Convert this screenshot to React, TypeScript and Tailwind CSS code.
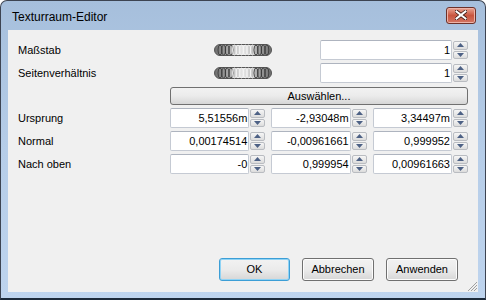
import React from "react";

const font = { fontFamily: '"Liberation Sans", Arial, sans-serif' };

function Spinner() {
  return (
    <div className="flex flex-col w-[15px] h-full gap-[1px] py-[1px]">
      {[0, 1].map((i) => (
        <div
          key={i}
          className="flex-1 flex items-center justify-center border border-[#b9bcc1] rounded-[2px] bg-gradient-to-b from-[#f6f6f6] to-[#dcdcdc]"
        >
          <svg width="7" height="4" viewBox="0 0 7 4">
            {i === 0 ? (
              <polygon points="0,4 7,4 3.5,0" fill="#4d6185" />
            ) : (
              <polygon points="0,0 7,0 3.5,4" fill="#4d6185" />
            )}
          </svg>
        </div>
      ))}
    </div>
  );
}

function NumField({ value, className = "" }: { value: string; className?: string }) {
  return (
    <div className={`flex h-[20px] gap-[1px] ${className}`}>
      <div className="flex-1 min-w-0 flex items-center justify-end pr-[1px] bg-white border border-[#c5cad3] border-t-[#aeb4bf] rounded-[2px] text-[11px] text-black leading-none whitespace-nowrap overflow-hidden">
        {value}
      </div>
      <Spinner />
    </div>
  );
}

function Knob() {
  const ridges = Array.from({ length: 14 }, (_, i) => i);
  return (
    <svg width="58" height="12" viewBox="0 0 58 12">
      <defs>
        <linearGradient id="kg" x1="0" x2="1" y1="0" y2="0">
          <stop offset="0" stopColor="#6c6c6c" />
          <stop offset="0.5" stopColor="#e8e8e8" />
          <stop offset="1" stopColor="#6c6c6c" />
        </linearGradient>
      </defs>
      <rect x="0.5" y="0.5" width="57" height="11" rx="5.5" fill="url(#kg)" stroke="#555" />
      {ridges.map((i) => (
        <ellipse
          key={i}
          cx={6 + i * 3.6}
          cy="6"
          rx="2"
          ry="5"
          fill="none"
          stroke={i > 3 && i < 10 ? "#f4f4f4" : "#3a3a3a"}
          strokeWidth="0.9"
        />
      ))}
    </svg>
  );
}

function DlgButton({ label, primary }: { label: string; primary?: boolean }) {
  return (
    <button
      className={`h-[23px] flex items-center justify-center rounded-[3px] border text-[11px] text-black bg-gradient-to-b from-[#f2f2f2] via-[#ebebeb] to-[#d6d6d6] ${
        primary
          ? "w-[71px] border-[#3c9ed6] shadow-[inset_0_0_0_1px_#8fd3f5]"
          : "w-[72px] border-[#707070] shadow-[inset_0_0_0_1px_#fcfcfc]"
      }`}
    >
      {label}
    </button>
  );
}

export default function App() {
  return (
    <div
      style={font}
      className="w-[486px] h-[300px] flex flex-col rounded-t-[7px] border border-[#3d4452] border-b-2 border-b-[#1c2a3a] bg-gradient-to-b from-[#a6bfdc] via-[#b6cde8] to-[#bed4ee] overflow-hidden"
    >
      <div className="h-[29px] flex items-center justify-between pl-[11px] pr-[9px]">
        <span className="text-[12px] text-black pt-[2px]">Texturraum-Editor</span>
        <div className="w-[30px] h-[17px] mb-[1px] flex items-center justify-center rounded-[3px] border border-[#6d3129] bg-gradient-to-b from-[#e8a493] via-[#c9553f] to-[#d27563] shadow-[inset_0_0_0_1px_#eeb3a7]">
          <svg width="12" height="10" viewBox="0 0 12 10">
            <path d="M1.5 1.5 L10.5 8.5 M10.5 1.5 L1.5 8.5" stroke="#3e1b16" strokeWidth="3.6" strokeLinecap="square" />
            <path d="M1.5 1.5 L10.5 8.5 M10.5 1.5 L1.5 8.5" stroke="#ffffff" strokeWidth="2" strokeLinecap="square" />
          </svg>
        </div>
      </div>
      <div className="flex-1 mx-[7px] mb-[6px] bg-[#f0f0f0] flex flex-col pl-[10px] pr-[10px] pt-[10px] pb-[11px] relative">
        <div className="flex items-center h-[20px]">
          <span className="w-[152px] text-[11px] text-black">Maßstab</span>
          <div className="w-[150px] pl-[44px]">
            <Knob />
          </div>
          <NumField value="1" className="w-[148px]" />
        </div>
        <div className="flex items-center h-[20px] mt-[3px]">
          <span className="w-[152px] text-[11px] text-black">Seitenverhältnis</span>
          <div className="w-[150px] pl-[44px]">
            <Knob />
          </div>
          <NumField value="1" className="w-[148px]" />
        </div>
        <div className="flex items-center mt-[4px]">
          <span className="w-[152px]" />
          <button className="w-[298px] h-[18px] flex items-center justify-center rounded-[3px] border border-[#707070] bg-gradient-to-b from-[#f2f2f2] via-[#ebebeb] to-[#d6d6d6] text-[11px] text-black leading-none">
            Auswählen...
          </button>
        </div>
        {[
          ["Ursprung", "5,51556m", "-2,93048m", "3,34497m"],
          ["Normal", "0,00174514", "-0,00961661", "0,999952"],
          ["Nach oben", "-0", "0,999954", "0,00961663"],
        ].map(([label, a, b, c]) => (
          <div key={label} className="flex items-center mt-[3px]">
            <span className="w-[152px] text-[11px] text-black">{label}</span>
            <div className="w-[298px] grid grid-cols-3 gap-[6px]">
              <NumField value={a} />
              <NumField value={b} />
              <NumField value={c} />
            </div>
          </div>
        ))}
        <div className="flex-1" />
        <div className="flex justify-end gap-[12px] pr-[10px]">
          <DlgButton label="OK" primary />
          <DlgButton label="Abbrechen" />
          <DlgButton label="Anwenden" />
        </div>
        <svg className="absolute right-[1px] bottom-[1px]" width="11" height="11" viewBox="0 0 11 11">
          {[3, 6, 9].map((o) => (
            <line key={o} x1={11 - o} y1="11" x2="11" y2={11 - o} stroke="#a0a0a0" strokeWidth="1" />
          ))}
        </svg>
      </div>
    </div>
  );
}
